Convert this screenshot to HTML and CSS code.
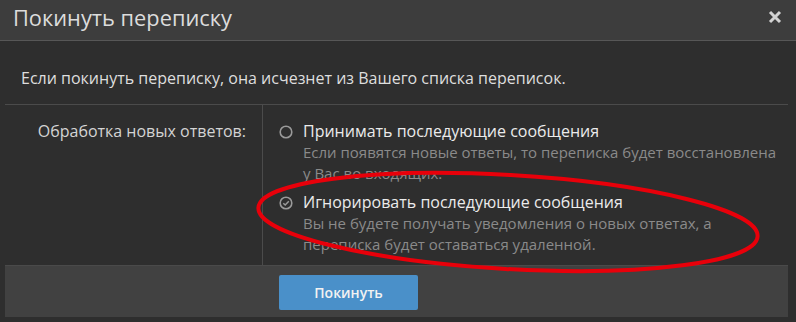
FILE: index.html
```html
<!DOCTYPE html>
<html lang="ru">
<head>
<meta charset="utf-8">
<title>Покинуть переписку</title>
<link rel="stylesheet" href="styles.css">
</head>
<body>
<div class="dialog">
  <div class="dialog-header">
    <h2 class="dialog-title">Покинуть переписку</h2>
    <span class="dialog-close" aria-label="Закрыть">
      <svg width="14" height="14" viewBox="0 0 14 14"><path d="M2 2 L12 12 M12 2 L2 12" stroke="#d2d2d2" stroke-width="3" stroke-linecap="butt"/></svg>
    </span>
  </div>
  <div class="dialog-body">
    <p class="intro">Если покинуть переписку, она исчезнет из Вашего списка переписок.</p>
    <div class="form-row">
      <div class="form-label">Обработка новых ответов:</div>
      <div class="form-field">
        <div class="option">
          <span class="radio">
            <svg width="14" height="14" viewBox="0 0 14 14"><circle cx="7" cy="7" r="5.8" fill="none" stroke="#9a9a9a" stroke-width="1.6"/></svg>
          </span>
          <div class="option-text">
            <div class="option-title">Принимать последующие сообщения</div>
            <div class="option-hint">Если появятся новые ответы, то переписка будет восстановлена у Вас во входящих.</div>
          </div>
        </div>
        <div class="option">
          <span class="radio">
            <svg width="14" height="14" viewBox="0 0 14 14"><circle cx="7" cy="7" r="5.8" fill="none" stroke="#9a9a9a" stroke-width="1.6"/><path d="M4.3 7.2 L6.2 9 L9.8 5.2" fill="none" stroke="#9a9a9a" stroke-width="1.5"/></svg>
          </span>
          <div class="option-text">
            <div class="option-title">Игнорировать последующие сообщения</div>
            <div class="option-hint">Вы не будете получать уведомления о новых ответах, а переписка будет оставаться удаленной.</div>
          </div>
        </div>
      </div>
    </div>
    <div class="dialog-footer">
      <button class="btn-primary" type="button">Покинуть</button>
    </div>
  </div>
  <svg class="annotation" width="796" height="322" viewBox="0 0 796 322">
    <ellipse cx="508" cy="222" rx="250" ry="47" transform="rotate(3.3 508 222)" fill="none" stroke="#e8000a" stroke-width="4"/>
  </svg>
</div>
</body>
</html>
```
FILE: styles.css
```css
html, body {
  margin: 0;
  padding: 0;
  background: #2b2b2b;
}
.dialog {
  position: relative;
  width: 796px;
  height: 322px;
  background: #2e2e2e;
  font-family: "Open Sans", "Noto Sans", sans-serif;
  overflow: hidden;
}
.dialog-header {
  height: 41px;
  box-sizing: border-box;
  background: #3d3d3d;
  border-bottom: 1px solid #575757;
  display: flex;
  align-items: center;
  justify-content: space-between;
  padding: 0 14px 0 13px;
}
.dialog-title {
  margin: 0;
  font-weight: 400;
  font-size: 21.8px;
  color: #dcdcdc;
  line-height: 1;
  padding-bottom: 4px;
}
.dialog-close {
  display: flex;
  padding-bottom: 7px;
}
.dialog-body {
  padding: 0 8px 0 5px;
}
.intro {
  margin: 0;
  padding: 26px 16px 15px;
  font-size: 16px;
  line-height: 22px;
  color: #dedede;
  border-bottom: 1px solid #4b4b4b;
}
.form-row {
  display: grid;
  grid-template-columns: 258px 1fr;
}
.form-label {
  text-align: right;
  padding: 16px 16px 0 0;
  font-size: 16px;
  line-height: 21px;
  color: #d4d4d4;
  border-right: 1px solid #4b4b4b;
}
.form-field {
  padding: 16px 0 10px 16px;
  display: flex;
  flex-direction: column;
  gap: 8px;
}
.option {
  display: flex;
  gap: 10px;
}
.radio {
  display: flex;
  padding-top: 4px;
}
.option-title {
  font-size: 16px;
  line-height: 21px;
  color: #ebebeb;
}
.option-hint {
  font-size: 15px;
  line-height: 21px;
  color: #8a8a8a;
  padding-right: 10px;
}
.dialog-footer {
  background: #414141;
  border-top: 1px solid #4a4a4a;
  height: 52px;
  box-sizing: border-box;
  padding: 9px 0 0 274px;
}
.btn-primary {
  width: 139px;
  height: 35px;
  border: 0;
  border-radius: 2px;
  background: #4a90c9;
  color: #f2f2f2;
  font-family: "Open Sans", "Noto Sans", sans-serif;
  font-size: 14px;
  font-weight: 600;
  cursor: pointer;
}
.annotation {
  position: absolute;
  left: 0;
  top: 0;
  pointer-events: none;
}
```
